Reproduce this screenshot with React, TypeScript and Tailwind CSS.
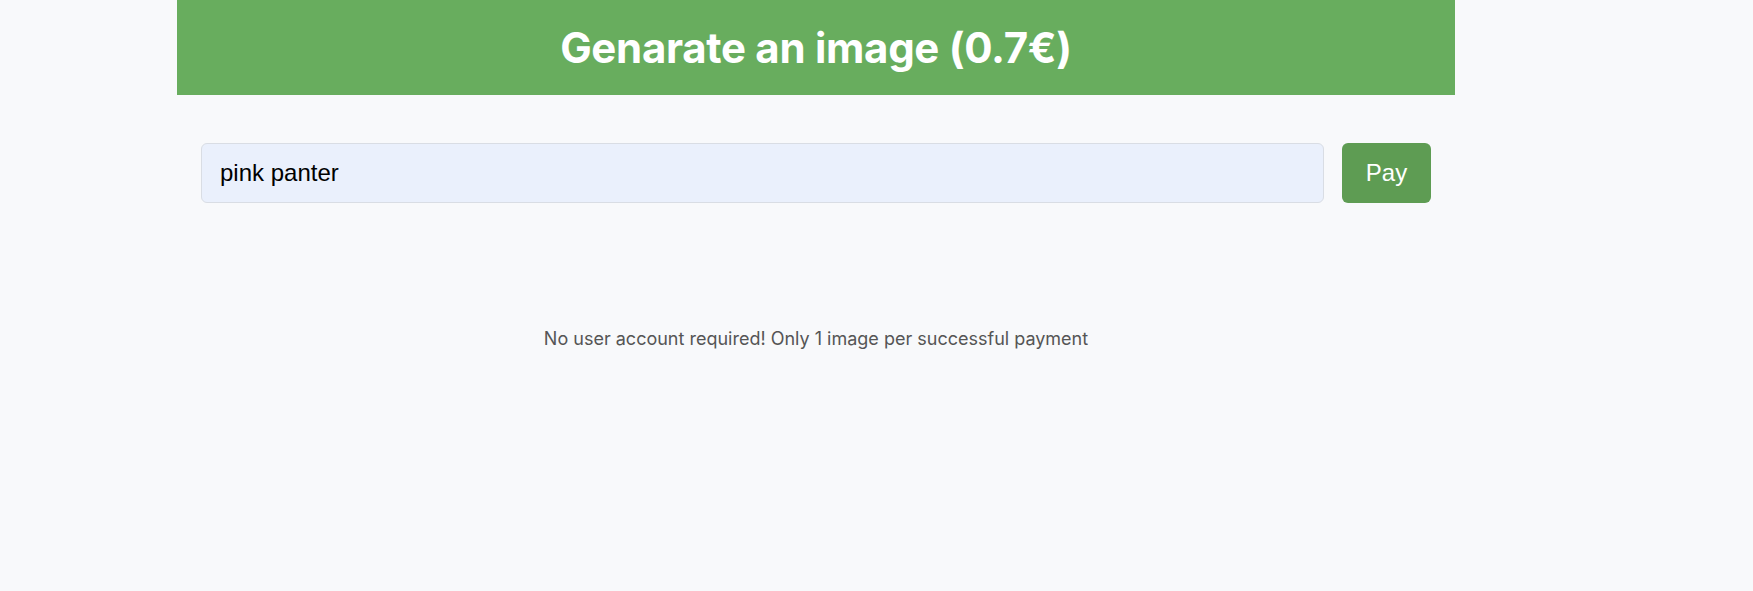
export default function App() {
  return (
    <div className="min-h-[591px] w-full bg-[#f8f9fb] font-['Inter',sans-serif]">
      <div className="ml-[177px] w-[1278px]">
        <header className="flex h-[95px] items-center justify-center bg-[#68ad5e]">
          <h1 className="text-[42px] font-bold tracking-[-0.3px] text-white">
            Genarate an image (0.7€)
          </h1>
        </header>

        <form
          className="flex gap-[18px] px-6 pt-[48px]"
          onSubmit={(e) => e.preventDefault()}
        >
          <input
            type="text"
            defaultValue="pink panter"
            className="h-[60px] flex-1 rounded-[6px] border border-[#d9dde4] bg-[#eaf0fc] px-[18px] font-['Liberation_Sans',sans-serif] text-[24px] text-black outline-none"
          />
          <button
            type="submit"
            className="h-[60px] w-[89px] rounded-[6px] bg-[#5e9c53] font-['Liberation_Sans',sans-serif] text-[24px] text-white"
          >
            Pay
          </button>
        </form>

        <p className="mt-[122px] text-center text-[18px] text-[#555]">
          No user account required! Only 1 image per successful payment
        </p>
      </div>
    </div>
  );
}
